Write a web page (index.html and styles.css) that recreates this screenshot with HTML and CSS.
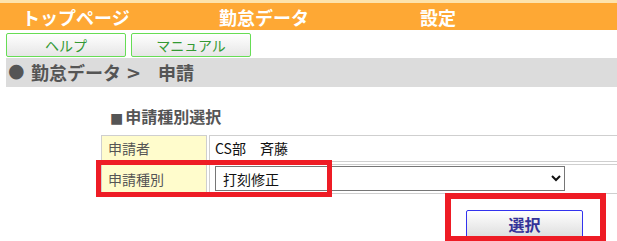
FILE: index.html
```html
<!DOCTYPE html>
<html lang="ja">
<head>
<meta charset="utf-8">
<title>申請</title>
<link rel="stylesheet" href="styles.css">
</head>
<body>
<div class="stripe"></div>
<nav class="menu">
  <span class="menu-item">トップページ</span>
  <span class="menu-item">勤怠データ</span>
  <span class="menu-item">設定</span>
</nav>
<div class="tools">
  <button class="tool-btn" type="button">ヘルプ</button>
  <button class="tool-btn" type="button">マニュアル</button>
</div>
<div class="crumb"><span class="dot">● </span><span class="crumb-part">勤怠データ</span><span class="sep"> &gt; </span><span class="crumb-part">申請</span></div>
<main class="content">
  <h2 class="sec"><span class="sq">■</span>申請種別選択</h2>
  <table class="form">
    <tr class="row-1">
      <th class="label">申請者</th>
      <td class="value">CS部　斉藤</td>
    </tr>
    <tr class="row-2">
      <th class="label">申請種別</th>
      <td class="value value-select">
        <select class="kind">
          <option>打刻修正</option>
        </select>
      </td>
    </tr>
  </table>
  <div class="actions">
    <button class="pick-btn" type="button">選択</button>
  </div>
</main>
<div class="mark mark-1"></div>
<div class="mark mark-2"></div>
</body>
</html>
```
FILE: styles.css
```css
html, body {
  margin: 0;
  padding: 0;
  overflow: hidden;
  background: #fff;
}
body {
  font-family: "Noto Sans CJK JP", "Noto Sans", sans-serif;
  width: 617px;
  height: 241px;
  position: relative;
}
.stripe {
  height: 3px;
  background: #fde3ad;
}
.menu {
  height: 27px;
  background: #fea834;
  display: grid;
  grid-template-columns: 197px 201px auto;
  padding-left: 22px;
  box-sizing: border-box;
}
.menu-item {
  color: #fff;
  font-weight: bold;
  font-size: 18px;
  line-height: 25px;
  padding-top: 2px;
}
.tools {
  display: flex;
  gap: 5px;
  margin: 3px 0 0 6px;
}
.tool-btn {
  width: 120px;
  height: 24px;
  margin: 0;
  padding: 0;
  border: 1px solid #66dd55;
  border-radius: 2px;
  background: linear-gradient(#ffffff, #e6e6e6);
  color: #339933;
  font-family: "Noto Sans CJK JP", sans-serif;
  font-size: 14px;
  line-height: 22px;
}
.crumb {
  margin: 1px 0 0 6px;
  height: 29px;
  background: #dcdcdc;
  color: #555;
  font-weight: bold;
  font-size: 18px;
  line-height: 29px;
  padding-left: 2px;
  display: flex;
  white-space: pre;
}
.dot {
  font-family: "DejaVu Sans", sans-serif;
  font-size: 19px;
  width: 23px;
  position: relative;
  top: -2px;
}
.sep {
  width: 37px;
  padding-left: 5px;
  box-sizing: border-box;
  font-family: "DejaVu Sans", sans-serif;
  font-size: 18px;
  white-space: normal;
}
.content {
  padding-left: 99px;
}
.sec {
  margin: 17px 0 0 0;
  padding-left: 11px;
  font-size: 16px;
  line-height: 24px;
  font-weight: bold;
  color: #555;
}
.sq {
  font-family: "DejaVu Sans", sans-serif;
  font-size: 14px;
  margin-right: 2px;
}
.form {
  margin-top: 3px;
  border-spacing: 2px;
  border-collapse: separate;
  width: 612px;
}
.label {
  width: 92px;
  background: #fffccc;
  border: 1px solid #cfcfcf;
  color: #555;
  font-weight: normal;
  font-size: 14px;
  text-align: left;
  padding: 0 6px;
}
.value {
  border: 1px solid #cfcfcf;
  color: #111;
  font-size: 14px;
  padding: 0 5px;
}
.row-1 .label,
.row-1 .value {
  height: 25px;
  line-height: 25px;
}
.row-2 .label {
  height: 28px;
}
.value-select {
  padding: 1px 5px 2px;
}
.kind {
  display: block;
  width: 350px;
  height: 25px;
  margin: 0;
  font-family: "Noto Sans CJK JP", sans-serif;
  font-size: 14px;
  color: #111;
  border: 1px solid #767676;
  border-radius: 0;
  background: #fff;
  padding: 0 3px;
}
.actions {
  margin: 14px 0 0 367px;
}
.pick-btn {
  width: 117px;
  height: 28px;
  margin: 0;
  padding: 0;
  border: 1px solid #3333ee;
  border-radius: 2px;
  background: linear-gradient(#ffffff, #dedede);
  color: #333399;
  font-family: "Noto Sans CJK JP", sans-serif;
  font-weight: bold;
  font-size: 16px;
  line-height: 26px;
}
.mark {
  position: absolute;
  border: 5px solid #ee1c25;
  box-sizing: border-box;
}
.mark-1 {
  left: 96px;
  top: 160px;
  width: 236px;
  height: 37px;
}
.mark-2 {
  left: 445px;
  top: 193px;
  width: 161px;
  height: 48px;
  border-width: 6px 6px 5px 6px;
}
```
